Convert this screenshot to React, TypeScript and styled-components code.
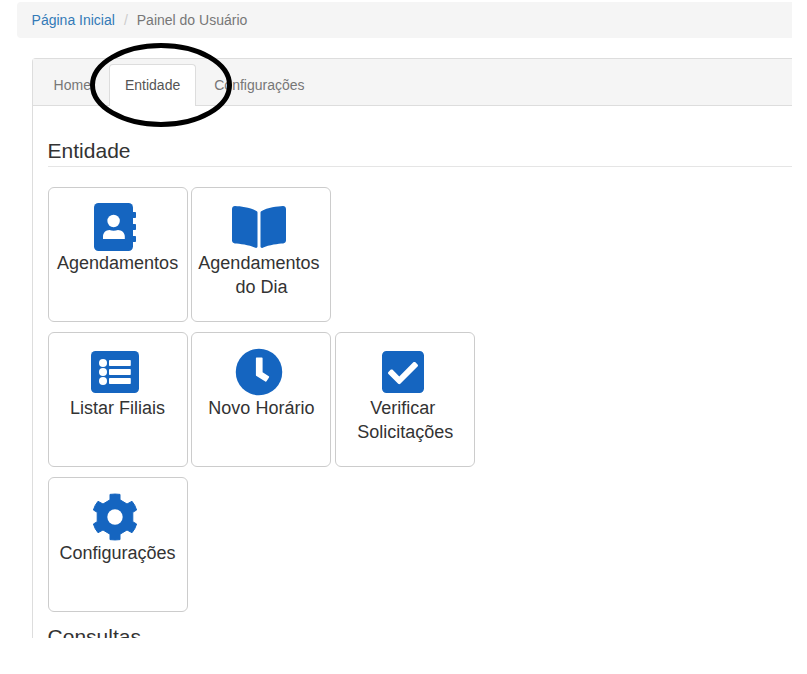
import React from 'react';
import styled, { createGlobalStyle } from 'styled-components';
import { FaBookOpen, FaCheckSquare } from 'react-icons/fa';

const GlobalStyle = createGlobalStyle`
  * { box-sizing: border-box; }
  body { margin: 0; background: #fff; color: #333; font-family: "Liberation Sans", Arial, sans-serif; font-size: 14px; line-height: 20px; }
`;

const Viewport = styled.div`
  width: 792px;
  height: 638px;
  overflow: hidden;
  padding: 2px 0 0 16.6px;
`;

const Breadcrumb = styled.nav`
  display: flex;
  height: 36px;
  padding: 8px 15px;
  background: #f5f5f5;
  border-radius: 4px 0 0 4px;
`;

const Crumb = styled.span<{ $link?: boolean }>`
  color: ${(p) => (p.$link ? '#337ab7' : '#777')};
`;

const Separator = styled.span`
  padding: 0 9px;
  color: #ccc;
`;

const Panel = styled.main`
  margin: 20px 0 0 15px;
  height: 700px;
  border: 1px solid #ddd;
  border-right: 0;
  border-top-left-radius: 4px;
`;

const TabBar = styled.div`
  position: relative;
  display: flex;
  height: 47px;
  padding: 5px 0 0 5px;
  background: #f5f5f5;
  border-bottom: 1px solid #ddd;
`;

const Tab = styled.span<{ $active?: boolean }>`
  height: 42px;
  margin-right: 2px;
  padding: 10px 15px;
  border: 1px solid ${(p) => (p.$active ? '#ddd' : 'transparent')};
  border-bottom: 0;
  border-radius: 4px 4px 0 0;
  background: ${(p) => (p.$active ? '#fff' : 'transparent')};
  color: ${(p) => (p.$active ? '#555' : '#777')};
`;

const Highlight = styled.svg`
  position: absolute;
  left: 56.4px;
  top: -18px;
`;

const Content = styled.div`
  padding: 31px 0 0 15px;
`;

const Heading = styled.h2`
  margin: 0 0 20px;
  height: 30px;
  border-bottom: 1px solid #e5e5e5;
  font-size: 21px;
  font-weight: 400;
  line-height: 28px;
`;

const NextHeading = styled(Heading)`
  margin-top: 11px;
`;

const Cards = styled.div`
  display: flex;
  flex-direction: column;
  gap: 10px;
`;

const CardRow = styled.div`
  display: flex;
  gap: 3.8px;
`;

const Card = styled.button`
  display: flex;
  flex-direction: column;
  align-items: center;
  width: 140px;
  height: 135px;
  padding: 15px 5px 0;
  border: 1px solid #ccc;
  border-radius: 6px;
  background: #fff;
  color: #333;
  font: 18px/24px "Liberation Sans", Arial, sans-serif;
`;

const IconBox = styled.span<{ $width: number }>`
  display: flex;
  height: 48px;
  margin-right: 5px;
  color: #1565c0;

  svg {
    width: ${(p) => p.$width}px;
    height: 48px;
  }
`;

const Label = styled.span`
  white-space: pre;
`;

const AddressBookIcon = () => (
  <svg viewBox="0 0 42 48" fill="currentColor">
    <rect width="39" height="48" rx="4.5" />
    <path d="M38 9h3.2q.8 0 .8.8v4.4q0 .8-.8.8H38zM38 21h3.2q.8 0 .8.8v4.4q0 .8-.8.8H38zM38 33h3.2q.8 0 .8.8v4.4q0 .8-.8.8H38z" />
    <circle cx="19.6" cy="18" r="6.2" fill="#fff" />
    <path d="M9 36v-2.6C9 29.8 12 27 15.4 27q4.2 1.4 8.6 0c3.6 0 6.8 2.8 6.8 6.4V36z" fill="#fff" />
  </svg>
);

const ListIcon = () => (
  <svg viewBox="0 0 48 48" fill="currentColor">
    <rect y="3" width="48" height="42" rx="4.5" />
    <g fill="#fff">
      {[15, 24, 33].map((y) => (
        <g key={y}>
          <circle cx="12" cy={y} r="4" />
          <rect x="18" y={y - 3} width="21.8" height="6" rx="0.8" />
        </g>
      ))}
    </g>
  </svg>
);

const ClockIcon = () => (
  <svg viewBox="0 0 48 48" fill="currentColor">
    <circle cx="24" cy="24" r="23.25" />
    <path d="M21.5 9.5h5.3q.8 0 .8.8v13.9l6.2 4q.7.5.2 1.2l-2.5 3.9q-.5.7-1.2.2L21.5 28q-.6-.4-.6-1.1V10.3q0-.8.6-.8z" fill="#fff" />
  </svg>
);

const GearIcon = () => (
  <svg viewBox="0 0 48 48" fill="currentColor">
    <path
      d="M19 1.4Q24 .7 29 1.4V6.8L36 11L41 8.3Q44.3 12.2 45.6 17L41.8 19.3V28.7L45.6 31Q44.3 35.8 41 39.7L36 37L29 41.2V46.6Q24 47.3 19 46.6V41.2L12 37L7 39.7Q3.7 35.8 2.4 31L6.2 28.7V19.3L2.4 17Q3.7 12.2 7 8.3L12 11L19 6.8Z"
      stroke="currentColor"
      strokeLinejoin="round"
    />
    <circle cx="24" cy="24" r="7.7" fill="#fff" />
  </svg>
);

interface Item {
  icon: React.ComponentType;
  width: number;
  lines: string[];
}

const rows: Item[][] = [
  [
    { icon: AddressBookIcon, width: 42, lines: ['Agendamentos'] },
    { icon: FaBookOpen, width: 54, lines: ['Agendamentos ', 'do Dia'] },
  ],
  [
    { icon: ListIcon, width: 48, lines: ['Listar Filiais'] },
    { icon: ClockIcon, width: 48, lines: ['Novo Horário'] },
    { icon: FaCheckSquare, width: 42, lines: ['Verificar ', 'Solicitações'] },
  ],
  [{ icon: GearIcon, width: 48, lines: ['Configurações'] }],
];

export default function App() {
  return (
    <>
      <GlobalStyle />
      <Viewport>
        <Breadcrumb>
          <Crumb $link>Página Inicial</Crumb>
          <Separator>/</Separator>
          <Crumb>Painel do Usuário</Crumb>
        </Breadcrumb>
        <Panel>
          <TabBar>
            <Tab>Home</Tab>
            <Tab $active>Entidade</Tab>
            <Tab>Configurações</Tab>
            <Highlight width="144" height="88" fill="none" stroke="#000" strokeWidth="5">
              <ellipse cx="72" cy="44" rx="68.5" ry="39.5" />
            </Highlight>
          </TabBar>
          <Content>
            <Heading>Entidade</Heading>
            <Cards>
              {rows.map((row, i) => (
                <CardRow key={i}>
                  {row.map(({ icon: Icon, width, lines }) => (
                    <Card key={lines.join('')}>
                      <IconBox $width={width}><Icon /></IconBox>
                      {lines.map((line) => <Label key={line}>{line}</Label>)}
                    </Card>
                  ))}
                </CardRow>
              ))}
            </Cards>
            <NextHeading>Consultas</NextHeading>
          </Content>
        </Panel>
      </Viewport>
    </>
  );
}
